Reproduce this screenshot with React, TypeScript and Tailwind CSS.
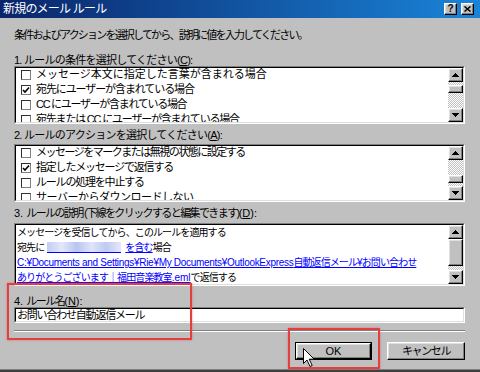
import React from "react";

const raised =
  "border border-t-white border-l-white border-r-black border-b-black shadow-[inset_-1px_-1px_0_#808080,inset_1px_1px_0_#dfdfdf] bg-[#c0c0c0]";

const Sunken = ({ className = "", children }: { className?: string; children?: React.ReactNode }) => (
  <div className={`border border-t-[#808080] border-l-[#808080] border-r-white border-b-white ${className}`}>
    <div className="flex h-full border border-t-black border-l-black border-r-[#dfdfdf] border-b-[#dfdfdf] bg-white">
      {children}
    </div>
  </div>
);

const Arrow = ({ down }: { down?: boolean }) => (
  <div className={`flex h-[14px] w-[15px] shrink-0 items-center justify-center ${raised}`}>
    <svg width="7" height="4" viewBox="0 0 7 4" shapeRendering="crispEdges">
      <path d={down ? "M0 0h7L3.5 4z" : "M3.5 0L7 4H0z"} fill="#000" />
    </svg>
  </div>
);

const ScrollBar = ({ thumb }: { thumb: string }) => (
  <div className="flex w-[15px] shrink-0 flex-col">
    <Arrow />
    <div className="flex-1 bg-[image:repeating-conic-gradient(#c0c0c0_0_25%,#fff_0_50%)] bg-[length:2px_2px]">
      <div className={`${thumb} ${raised}`} />
    </div>
    <Arrow down />
  </div>
);

const Check = ({ on }: { on?: boolean }) => (
  <span className="flex h-[10px] w-[10px] shrink-0 items-center justify-center border border-t-[#303030] border-l-[#303030] border-r-[#808080] border-b-[#808080] bg-white">
    {on && (
      <svg width="8" height="8" viewBox="0 0 8 8">
        <path d="M1 4l2 2 4-4.5" fill="none" stroke="#000" strokeWidth="1.6" />
      </svg>
    )}
  </span>
);

// tracking per row so the line lengths follow the old MS UI Gothic metrics
const conditions = [
  { t: "メッセージ本文に指定した言葉が含まれる場合", tr: "tracking-normal" },
  { t: "宛先にユーザーが含まれている場合", tr: "tracking-[-1.1px]" },
  { t: "CC にユーザーが含まれている場合", tr: "tracking-[-1.3px]" },
  { t: "宛先または CC にユーザーが含まれている場合", tr: "tracking-[-1.2px]" },
];

const actions = [
  { t: "メッセージをマークまたは無視の状態に設定する", tr: "tracking-[-1.5px]" },
  { t: "指定したメッセージで返信する", tr: "tracking-[-1.2px]" },
  { t: "ルールの処理を中止する", tr: "tracking-[-1.2px]" },
  { t: "サーバーからダウンロードしない", tr: "tracking-[-0.5px]" },
];

type Item = { t: string; tr: string };

const CheckList = ({ items, checked, thumb }: { items: Item[]; checked: number; thumb: string }) => (
  <Sunken className="h-[58px]">
    <div className="mt-[-1px] flex-1 overflow-hidden pl-[5px]">
      {items.map((it, i) => (
        <div key={it.t} className="flex h-[15px] items-center gap-[5px] whitespace-nowrap">
          <Check on={i === checked} />
          <span className={it.tr}>{it.t}</span>
        </div>
      ))}
    </div>
    <ScrollBar thumb={thumb} />
  </Sunken>
);

const App = () => {
  return (
    <div className="relative flex h-[372px] w-[480px] flex-col overflow-hidden bg-[#c0c0c0] font-[family-name:'Liberation_Sans','Noto_Sans_CJK_JP',sans-serif] text-[11px] text-black">
      {/* title bar */}
      <div className="flex h-[18px] shrink-0 items-center justify-between bg-[linear-gradient(90deg,#0a246a,#1a84d8)] pl-[3px] pr-[6px]">
        <span className="text-[12px] tracking-[-0.8px] text-white">新規のメール ルール</span>
        <div className="flex gap-[4px]">
          <div className={`flex h-[12px] w-[13px] items-center justify-center text-[10px] leading-none font-bold ${raised}`}>?</div>
          <div className={`flex h-[12px] w-[13px] items-center justify-center ${raised}`}>
            <svg width="7" height="6" viewBox="0 0 7 6">
              <path d="M0.5 0.5l6 5M6.5 0.5l-6 5" stroke="#000" strokeWidth="1.5" />
            </svg>
          </div>
        </div>
      </div>

      <div className="flex flex-1 flex-col pl-[14px] pr-[15px]">
        <p className="mt-[10px] leading-[14px] tracking-[-1.8px]">
          条件およびアクションを選択してから、説明に値を入力してください。
        </p>

        <p className="mt-[13px] leading-[11px] tracking-[-0.75px]">
          1. ルールの条件を選択してください(<u>C</u>):
        </p>
        <CheckList items={conditions} checked={1} thumb="mt-[3px] h-[8px]" />

        <p className="mt-[6px] leading-[11px] tracking-[-0.75px]">
          2. ルールのアクションを選択してください(<u>A</u>):
        </p>
        <div className="mt-[3px]">
          <CheckList items={actions} checked={1} thumb="mt-[15px] h-[8px]" />
        </div>

        <p className="mt-[6px] leading-[11px]">
          3. <span className="tracking-[-1.6px]">ルールの説明 (下線をクリックすると編集できます)</span>(<u>D</u>):
        </p>
        <Sunken className="mt-[4px] h-[63px]">
          <div className="flex-1 overflow-hidden pl-[1px] text-[10px] leading-[15px] whitespace-nowrap">
            <div className="tracking-[-0.9px]">メッセージを受信してから、このルールを適用する</div>
            <div className="flex items-center tracking-[-0.9px]">
              <span>宛先に</span>
              <span className="ml-[3px] h-[11px] w-[74px] border-b border-[#0000ff] bg-[linear-gradient(90deg,#c3cdf4,#e3e7fb_20%,#b8c5f1_40%,#dfe4fa_60%,#bfcaf3_80%,#e6e9fb)]" />
              <span className="ml-[4px] text-[#0000ff] underline">を含む</span>
              <span>場合</span>
            </div>
            <div className="text-[#0000ff] underline">
              <span className="tracking-[-0.3px]">C:¥Documents and Settings¥Rie¥My Documents¥OutlookExpress</span>
              <span className="tracking-[-0.9px]">自動返信メール¥お問い合わせ</span>
            </div>
            <div className="tracking-[-0.9px]">
              <span className="text-[#0000ff] underline">
                ありがとうございます｜福田音楽教室<span className="tracking-normal">.eml</span>
              </span>
              <span>で返信する</span>
            </div>
          </div>
          <ScrollBar thumb="h-[27px]" />
        </Sunken>

        <p className="mt-[10px] leading-[11px]">
          4. <span className="tracking-[-1.5px]">ルール名</span>(<u>N</u>):
        </p>
        <Sunken className="h-[16px]">
          <div className="pl-[1px] leading-[12px] tracking-[-1.2px]">お問い合わせ自動返信メール</div>
        </Sunken>

        <div className="mt-[7px] h-[2px] border-t border-b border-t-[#808080] border-b-white" />

        <div className="mt-[10px] flex justify-end gap-[15px]">
          <div className="flex h-[18px] w-[77px] border border-black">
            <div className={`flex flex-1 items-center justify-center ${raised}`}>OK</div>
          </div>
          <div className={`flex h-[18px] w-[78px] items-center justify-center tracking-[-1.4px] ${raised}`}>
            キャンセル
          </div>
        </div>
      </div>

      {/* window bottom edge */}
      <div className="h-[1px] shrink-0 bg-[#808080]" />
      <div className="h-[2px] shrink-0 bg-[#404040]" />

      {/* annotations */}
      <div className="pointer-events-none absolute left-[7px] top-[283px] h-[57px] w-[185px] border-2 border-[#e2403f] shadow-[0_0_2px_rgba(226,64,63,0.6)]" />
      <div className="pointer-events-none absolute left-[288px] top-[328px] h-[41px] w-[92px] border-2 border-[#e2403f] shadow-[0_0_2px_rgba(226,64,63,0.6)]" />

      {/* mouse cursor */}
      <svg className="absolute left-[303px] top-[348px]" width="12" height="20" viewBox="0 0 12 20">
        <path d="M0.5 0.5v15l3.5-3.5 3 6.5 2.2-1-3-6.3h5z" fill="#fff" stroke="#000" strokeWidth="1" strokeLinejoin="round" />
      </svg>
    </div>
  );
};

export default App;
